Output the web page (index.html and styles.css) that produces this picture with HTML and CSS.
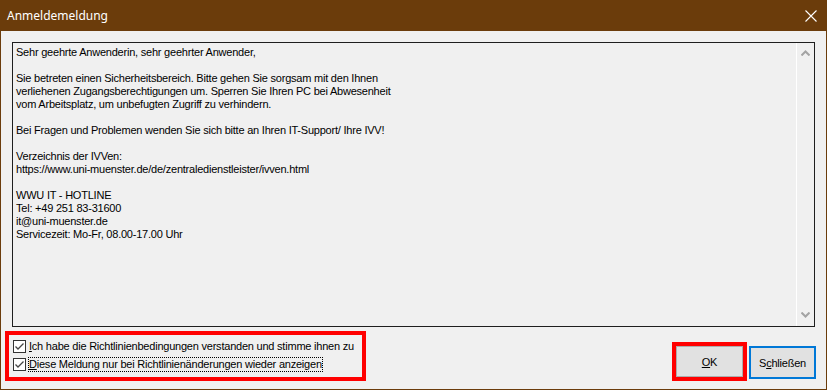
FILE: index.html
```html
<!DOCTYPE html>
<html lang="de">
<head>
    <meta charset="UTF-8">
    <meta name="viewport" content="width=device-width, initial-scale=1.0">
    <title>Anmeldemeldung</title>
    <link rel="stylesheet" href="styles.css">
</head>
<body>
    <div class="window">
        <div class="titlebar">
            <span class="title">Anmeldemeldung</span>
            <svg class="close" width="12" height="12" viewBox="0 0 12 12">
                <path d="M0.5 0.5 L11.5 11.5 M11.5 0.5 L0.5 11.5" stroke="#fff" stroke-width="1.1" fill="none"/>
            </svg>
        </div>
        <div class="client">
            <div class="textbox">
                <div class="text">
                    <p>Sehr geehrte Anwenderin, sehr geehrter Anwender,</p>
                    <p>Sie betreten einen Sicherheitsbereich. Bitte gehen Sie sorgsam mit den Ihnen<br>
                    verliehenen Zugangsberechtigungen um. Sperren Sie Ihren PC bei Abwesenheit<br>
                    vom Arbeitsplatz, um unbefugten Zugriff zu verhindern.</p>
                    <p>Bei Fragen und Problemen wenden Sie sich bitte an Ihren IT-Support/ Ihre IVV!</p>
                    <p>Verzeichnis der IVVen:<br>
                    https://www.uni-muenster.de/de/zentraledienstleister/ivven.html</p>
                    <p>WWU IT - HOTLINE<br>
                    Tel: +49 251 83-31600<br>
                    it@uni-muenster.de<br>
                    Servicezeit: Mo-Fr, 08.00-17.00 Uhr</p>
                </div>
                <div class="scrollbar">
                    <svg width="9" height="6" viewBox="0 0 9 6"><path d="M0.5 5.5 L4.5 1.5 L8.5 5.5" stroke="#a3a3a3" stroke-width="2" fill="none"/></svg>
                    <svg width="9" height="6" viewBox="0 0 9 6"><path d="M0.5 0.5 L4.5 4.5 L8.5 0.5" stroke="#a3a3a3" stroke-width="2" fill="none"/></svg>
                </div>
            </div>
            <div class="footer">
                <div class="checks marked">
                    <label class="check">
                        <span class="box"><svg width="11" height="11" viewBox="0 0 11 11"><path d="M1.5 5.5 L4 8 L9.5 2.5" stroke="#444" stroke-width="1.3" fill="none"/></svg></span>
                        <span class="label"><u>I</u>ch habe die Richtlinienbedingungen verstanden und stimme ihnen zu</span>
                    </label>
                    <label class="check">
                        <span class="box"><svg width="11" height="11" viewBox="0 0 11 11"><path d="M1.5 5.5 L4 8 L9.5 2.5" stroke="#444" stroke-width="1.3" fill="none"/></svg></span>
                        <span class="label focus"><u>D</u>iese Meldung nur bei Richtlinienänderungen wieder anzeigen</span>
                    </label>
                </div>
                <div class="buttons">
                    <div class="marked ok-mark">
                        <button class="btn"><u>O</u>K</button>
                    </div>
                    <button class="btn default">S<u>c</u>hließen</button>
                </div>
            </div>
        </div>
    </div>
</body>
</html>
```

FILE: styles.css
```css
body {
    margin: 0;
    font-family: "Liberation Sans", Arial, sans-serif;
    font-size: 11px;
    letter-spacing: -0.22px;
    color: #000;
}
.window {
    width: 827px;
    height: 390px;
    box-sizing: border-box;
    background: #f0f0f0;
    border: 1px solid #6b3c0b;
    border-top: none;
    display: flex;
    flex-direction: column;
}
.titlebar {
    height: 31px;
    margin: 0 -1px;
    background: #6b3c0b;
    display: flex;
    align-items: center;
    justify-content: space-between;
    padding: 0 10px 0 7px;
    color: #fff;
}
.title {
    font-family: "Noto Sans", "Open Sans", sans-serif;
    font-size: 12px;
    letter-spacing: 0;
}
.close {
    display: block;
}
.client {
    flex: 1;
    display: flex;
    flex-direction: column;
}
.textbox {
    margin: 11px 11px 0 11px;
    height: 285px;
    box-sizing: border-box;
    border: 1px solid #1e1e1e;
    display: flex;
}
.text {
    flex: 1;
    padding: 3px 3px;
    line-height: 13px;
}
.text p {
    margin: 0 0 13px 0;
}
.scrollbar {
    width: 17px;
    border-left: 1px solid #fff;
    display: flex;
    flex-direction: column;
    justify-content: space-between;
    align-items: center;
    padding: 7px 0 8px;
}
.scrollbar svg {
    display: block;
}
.footer {
    display: flex;
    justify-content: space-between;
    align-items: flex-start;
    padding: 4px 10px 0 4px;
}
.marked {
    border: 4px solid #ff0000;
}
.checks {
    width: 361px;
    height: 50px;
    box-sizing: border-box;
    padding: 5px 0 0 4px;
    display: flex;
    flex-direction: column;
    gap: 5px;
}
.check {
    display: flex;
    align-items: center;
    height: 13px;
    white-space: nowrap;
}
.box {
    width: 13px;
    height: 13px;
    box-sizing: border-box;
    border: 1px solid #333;
    background: #fff;
    display: flex;
    align-items: center;
    justify-content: center;
    margin-right: 3px;
}
.box svg {
    display: block;
}
.label {
    line-height: 13px;
}
.focus {
    outline: 1px dotted #000;
    outline-offset: 0;
}
.buttons {
    display: flex;
    align-items: flex-start;
    gap: 2px;
    margin-top: 11px;
}
.ok-mark {
    display: flex;
}
.btn {
    font-family: "Liberation Sans", Arial, sans-serif;
    font-size: 11px;
    letter-spacing: -0.22px;
    width: 67px;
    height: 31px;
    background: #e1e1e1;
    border: 1px solid #adadad;
    padding: 0;
    color: #000;
}
.btn.default {
    margin-top: 4px;
    height: 33px;
    border: 2px solid #0078d7;
}
```
